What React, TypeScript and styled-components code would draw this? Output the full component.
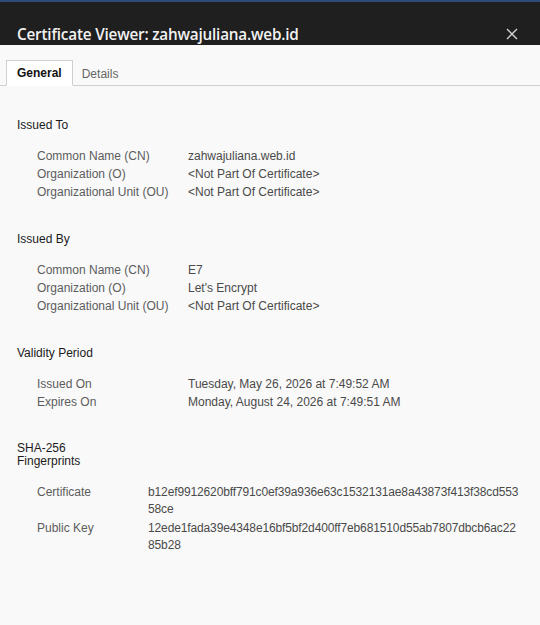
import React from "react";
import styled, { createGlobalStyle } from "styled-components";

const Global = createGlobalStyle`
  html, body { margin: 0; padding: 0; }
  body {
    background: #f9f9f9;
    font-family: "Liberation Sans", Arial, sans-serif;
    -webkit-font-smoothing: antialiased;
  }
`;

const Window = styled.div`
  width: 540px;
  height: 625px;
  background: #f9f9f9;
  display: flex;
  flex-direction: column;
  overflow: hidden;
`;

const TitleBar = styled.header`
  height: 45px;
  box-sizing: border-box;
  background: #1f1f1f;
  border-top: 2px solid #2d4a78;
  display: flex;
  align-items: flex-end;
  justify-content: space-between;
  padding: 0 22px 0 17px;
`;

const Title = styled.h1`
  margin: 0;
  font-family: "Open Sans", "Noto Sans", sans-serif;
  font-weight: 600;
  font-size: 15.3px;
  line-height: 22px;
  color: #f2f2f2;
  letter-spacing: -0.2px;
`;

const CloseButton = styled.button`
  border: 0;
  background: none;
  padding: 0;
  width: 12px;
  height: 12px;
  margin-bottom: 5px;
  display: flex;
  cursor: pointer;
`;

const TabBar = styled.nav`
  margin-top: 14px;
  height: 26px;
  border-bottom: 1px solid #cfcfcf;
  display: flex;
  align-items: flex-end;
  padding-left: 6px;
`;

const Tab = styled.button<{ $active?: boolean }>`
  height: ${(p) => (p.$active ? "26px" : "25px")};
  margin-bottom: -1px;
  padding: 0 ${(p) => (p.$active ? "10px" : "8px")};
  border: ${(p) => (p.$active ? "1px solid #cfcfcf" : "1px solid transparent")};
  border-bottom: ${(p) => (p.$active ? "1px solid #ffffff" : "1px solid transparent")};
  background: ${(p) => (p.$active ? "#ffffff" : "transparent")};
  font-family: "Liberation Sans", Arial, sans-serif;
  font-size: 12px;
  font-weight: ${(p) => (p.$active ? 700 : 400)};
  color: ${(p) => (p.$active ? "#111111" : "#666666")};
  cursor: pointer;
`;

const Content = styled.main`
  padding: 31px 17px 0 17px;
  display: flex;
  flex-direction: column;
  gap: 30px;
`;

const Section = styled.section<{ $gap?: number; $offset?: number }>`
  display: flex;
  flex-direction: column;
  gap: ${(p) => p.$gap ?? 14}px;
  margin-top: ${(p) => p.$offset ?? 0}px;
`;

const Heading = styled.h2<{ $narrow?: boolean }>`
  margin: 0;
  font-size: 12px;
  font-weight: 400;
  color: #1b1b1b;
  line-height: ${(p) => (p.$narrow ? "13px" : "17px")};
  width: ${(p) => (p.$narrow ? "80px" : "auto")};
`;

const Fields = styled.dl<{ $labelWidth: number; $rowGap: number }>`
  margin: 0;
  padding-left: 20px;
  display: grid;
  grid-template-columns: ${(p) => p.$labelWidth}px 1fr;
  row-gap: ${(p) => p.$rowGap}px;
  font-size: 12px;
  line-height: 17px;
`;

const Label = styled.dt`
  color: #5c5c5c;
`;

const Value = styled.dd<{ $hash?: boolean }>`
  margin: 0;
  color: #4a4a4a;
  word-break: break-all;
  padding-right: ${(p) => (p.$hash ? "2px" : "20px")};
  letter-spacing: ${(p) => (p.$hash ? "-0.13px" : "normal")};
`;

type Field = [string, string];

const sections: { title: string; fields: Field[] }[] = [
  {
    title: "Issued To",
    fields: [
      ["Common Name (CN)", "zahwajuliana.web.id"],
      ["Organization (O)", "<Not Part Of Certificate>"],
      ["Organizational Unit (OU)", "<Not Part Of Certificate>"],
    ],
  },
  {
    title: "Issued By",
    fields: [
      ["Common Name (CN)", "E7"],
      ["Organization (O)", "Let's Encrypt"],
      ["Organizational Unit (OU)", "<Not Part Of Certificate>"],
    ],
  },
  {
    title: "Validity Period",
    fields: [
      ["Issued On", "Tuesday, May 26, 2026 at 7:49:52 AM"],
      ["Expires On", "Monday, August 24, 2026 at 7:49:51 AM"],
    ],
  },
];

const fingerprints: Field[] = [
  ["Certificate", "b12ef9912620bff791c0ef39a936e63c1532131ae8a43873f413f38cd55358ce"],
  ["Public Key", "12ede1fada39e4348e16bf5bf2d400ff7eb681510d55ab7807dbcb6ac2285b28"],
];

export default function App() {
  return (
    <Window>
      <Global />
      <TitleBar>
        <Title>Certificate Viewer: zahwajuliana.web.id</Title>
        <CloseButton aria-label="Close">
          <svg width="12" height="12" viewBox="0 0 12 12">
            <path d="M1 1 L11 11 M11 1 L1 11" stroke="#d0d0d0" strokeWidth="1.4" />
          </svg>
        </CloseButton>
      </TitleBar>
      <TabBar>
        <Tab $active>General</Tab>
        <Tab>Details</Tab>
      </TabBar>
      <Content>
        {sections.map((s) => (
          <Section key={s.title}>
            <Heading>{s.title}</Heading>
            <Fields $labelWidth={151} $rowGap={1}>
              {s.fields.map(([k, v]) => (
                <React.Fragment key={k}>
                  <Label>{k}</Label>
                  <Value>{v}</Value>
                </React.Fragment>
              ))}
            </Fields>
          </Section>
        ))}
        <Section $gap={16} $offset={1}>
          <Heading $narrow>SHA-256 Fingerprints</Heading>
          <Fields $labelWidth={111} $rowGap={2}>
            {fingerprints.map(([k, v]) => (
              <React.Fragment key={k}>
                <Label>{k}</Label>
                <Value $hash>{v}</Value>
              </React.Fragment>
            ))}
          </Fields>
        </Section>
      </Content>
    </Window>
  );
}
